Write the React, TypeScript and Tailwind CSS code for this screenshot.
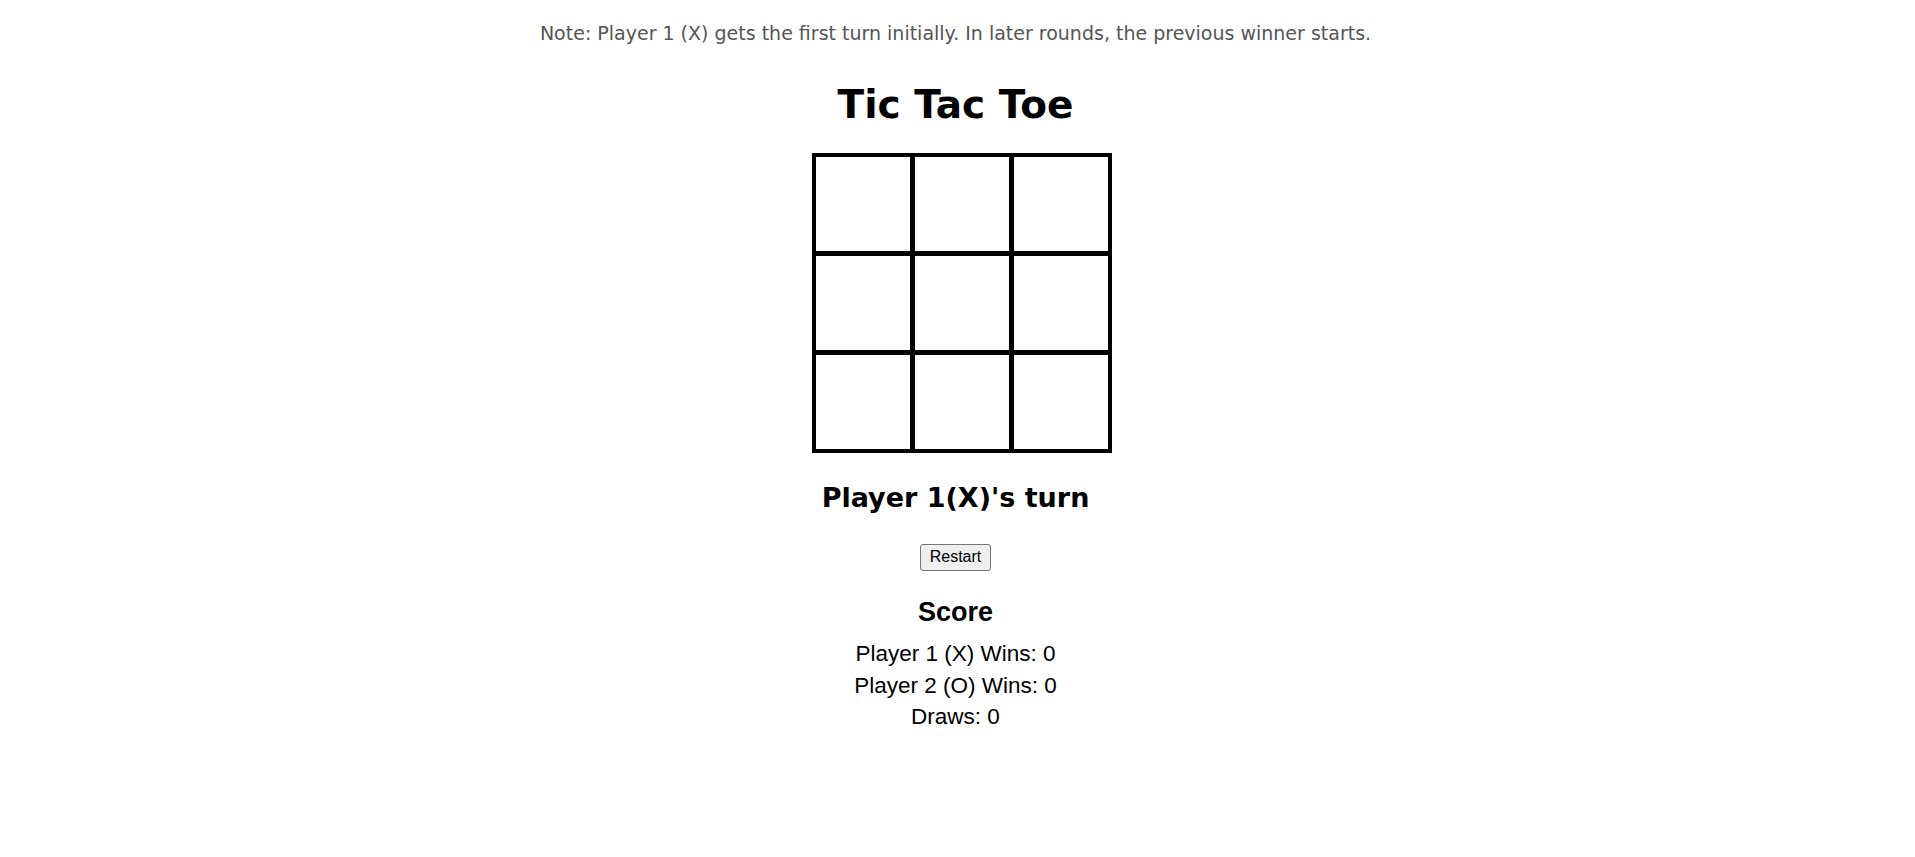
import { useState } from 'react'

type Cell = 'X' | 'O' | null

const LINES = [
  [0, 1, 2], [3, 4, 5], [6, 7, 8],
  [0, 3, 6], [1, 4, 7], [2, 5, 8],
  [0, 4, 8], [2, 4, 6],
]

function winnerOf(board: Cell[]): Cell {
  for (const [a, b, c] of LINES) {
    if (board[a] && board[a] === board[b] && board[a] === board[c]) return board[a]
  }
  return null
}

export default function App() {
  const [board, setBoard] = useState<Cell[]>(Array(9).fill(null))
  const [starter, setStarter] = useState<'X' | 'O'>('X')
  const [turn, setTurn] = useState<'X' | 'O'>('X')
  const [score, setScore] = useState({ x: 0, o: 0, draws: 0 })
  const [done, setDone] = useState(false)

  const winner = winnerOf(board)
  const full = board.every(Boolean)

  function play(i: number) {
    if (done || board[i]) return
    const next = [...board]
    next[i] = turn
    setBoard(next)
    const w = winnerOf(next)
    if (w) {
      setDone(true)
      setStarter(w)
      setScore((s) => (w === 'X' ? { ...s, x: s.x + 1 } : { ...s, o: s.o + 1 }))
      return
    }
    if (next.every(Boolean)) {
      setDone(true)
      setScore((s) => ({ ...s, draws: s.draws + 1 }))
      return
    }
    setTurn(turn === 'X' ? 'O' : 'X')
  }

  function restart() {
    setBoard(Array(9).fill(null))
    setTurn(starter)
    setDone(false)
  }

  const label = (p: 'X' | 'O') => (p === 'X' ? 'Player 1(X)' : 'Player 2(O)')
  let status = `${label(turn)}'s turn`
  if (winner) status = `${label(winner)} wins!`
  else if (full) status = "It's a draw!"

  return (
    <div className="flex flex-col items-center bg-white pr-[4px] text-black font-['Comic_Sans_MS','DejaVu_Sans',sans-serif]">
      <p className="pt-[24px] text-[19px] leading-none text-[#555]">
        Note: Player 1 (X) gets the first turn initially. In later rounds, the previous winner starts.
      </p>

      <h1 className="mt-[41.5px] text-[39px] leading-none font-bold">Tic Tac Toe</h1>

      {/* board: black gap + cell borders give 4px outer / 5px inner lines */}
      <div className="mt-[29px] ml-[13px] grid grid-cols-[repeat(3,98px)] gap-px border-2 border-black bg-black">
        {board.map((c, i) => (
          <button
            key={i}
            type="button"
            onClick={() => play(i)}
            className="flex h-[98px] w-[98px] items-center justify-center border-2 border-black bg-white text-[48px] font-bold"
          >
            {c}
          </button>
        ))}
      </div>

      <h2 className="mt-[31.5px] text-[27px] leading-none font-bold">{status}</h2>

      <button
        type="button"
        onClick={restart}
        className="mt-[32.5px] rounded-[3px] border border-[#767676] bg-[#efefef] px-[9px] py-[3.5px] font-['Liberation_Sans',Arial,sans-serif] text-[16px] leading-[18px] hover:bg-[#e5e5e5]"
      >
        Restart
      </button>

      <div className="flex flex-col items-center font-['Liberation_Sans',Arial,sans-serif]">
        <h3 className="mt-[28px] text-[27px] leading-none font-bold">Score</h3>
        <div className="mt-[12.5px] flex flex-col items-center text-[22.5px] leading-[31.5px]">
          <p>Player 1 (X) Wins: {score.x}</p>
          <p>Player 2 (O) Wins: {score.o}</p>
          <p>Draws: {score.draws}</p>
        </div>
      </div>
    </div>
  )
}
